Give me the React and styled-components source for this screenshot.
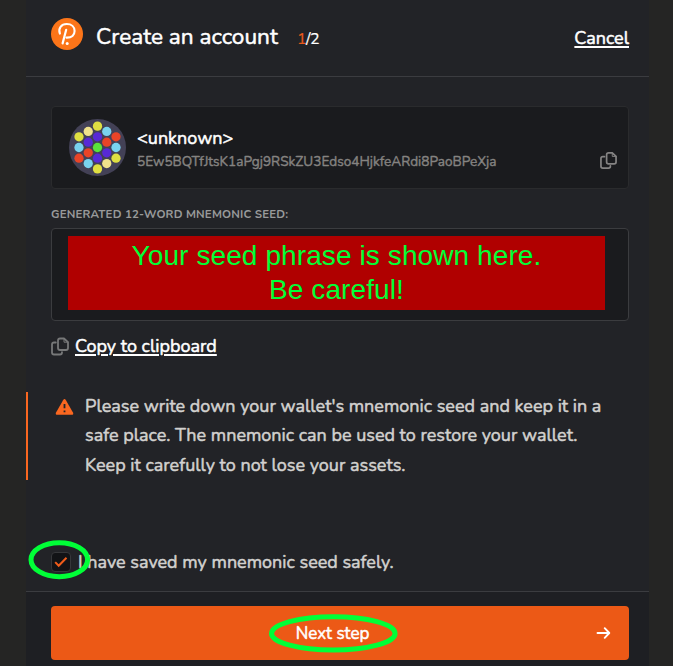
import React from 'react';
import styled, { createGlobalStyle } from 'styled-components';

const GlobalStyle = createGlobalStyle`
  * { box-sizing: border-box; }
  body {
    margin: 0;
    background: #252524;
    color: #fff;
    font-family: Nunito, Lato, 'Noto Sans', sans-serif;
    overflow: hidden;
  }
`;

const Panel = styled.main`
  width: 623px;
  height: 666px;
  margin-left: 26px;
  display: flex;
  flex-direction: column;
  background: #222327;
`;

const Header = styled.header`
  height: 77px;
  flex: none;
  display: flex;
  align-items: flex-start;
  padding: 18px 20px 0 25px;
  border-bottom: 1px solid #3b3c40;
`;

const Title = styled.h1`
  margin: 0 0 0 13px;
  width: 188px;
  font-size: 22.6px;
  line-height: 37px;
  font-weight: 400;
  -webkit-text-stroke: 0.5px #fff;
  white-space: nowrap;
`;

const Step = styled.span`
  margin-left: 13px;
  font-size: 16px;
  line-height: 43px;
  letter-spacing: -0.6px;
  -webkit-text-stroke: 0.2px currentColor;
  em { font-style: normal; color: #ea5a1c; }
`;

const Link = styled.a`
  color: #fff;
  font-size: 18px;
  line-height: 24px;
  -webkit-text-stroke: 0.5px #fff;
  text-decoration: underline;
  text-decoration-thickness: 2px;
  text-underline-offset: 2px;
  white-space: nowrap;
`;

const CancelLink = styled(Link)`
  margin: 8px 0 0 auto;
`;

const Body = styled.section`
  height: 514px;
  flex: none;
  display: flex;
  flex-direction: column;
`;

const AccountCard = styled.div`
  height: 83px;
  margin: 29px 20px 0 25px;
  padding: 12px 11px 0 17px;
  display: flex;
  background: #1a1b1e;
  border: 1px solid #2a2b2d;
  border-radius: 4px;
`;

const AccountInfo = styled.div`
  flex: 1;
  margin-left: 11px;
  padding-top: 7px;
`;

const AccountName = styled.div`
  font-size: 18px;
  line-height: 24px;
  -webkit-text-stroke: 0.5px #fff;
`;

const Address = styled.div`
  font-size: 13.6px;
  line-height: 24px;
  color: #858381;
  -webkit-text-stroke: 0.4px #858381;
  white-space: nowrap;
`;

const CardIcon = styled.div`
  margin-top: 33px;
  height: 17px;
`;

const FieldLabel = styled.div`
  margin: 17px 0 0 25px;
  font-size: 11.5px;
  font-weight: 700;
  line-height: 16px;
  letter-spacing: 0.18px;
  color: #999a9b;
  white-space: nowrap;
`;

const SeedBox = styled.div`
  height: 93px;
  flex: none;
  margin: 6px 20px 0 25px;
  padding: 7px 23px 0 16px;
  background: #1a1b1e;
  border: 1px solid #3b3c3f;
  border-radius: 4px;
`;

const SeedCover = styled.div`
  height: 74px;
  padding-top: 3px;
  background: #b00000;
  color: #00ff37;
  font: 28px/34px 'Liberation Sans', Arial, sans-serif;
  letter-spacing: 0.1px;
  text-align: center;
`;

const CopyRow = styled.div`
  display: flex;
  align-items: center;
  gap: 6px;
  height: 24px;
  margin: 13px 0 0 25px;
`;

const Warning = styled.div`
  display: flex;
  height: 88px;
  margin-top: 34px;
  padding-left: 27px;
  border-left: 2px solid #fa6720;
`;

const WarningIcon = styled.svg`
  flex: none;
  width: 19px;
  height: 18px;
  margin-top: 6px;
`;

const WarningText = styled.p`
  margin: 0 0 0 11px;
  font-size: 18px;
  line-height: 29.3px;
  color: #d2d1cf;
  -webkit-text-stroke: 0.5px #d2d1cf;
  white-space: nowrap;
`;

const Line = styled.span`
  display: block;
`;

const Agreement = styled.label`
  position: relative;
  display: flex;
  align-items: center;
  height: 24px;
  margin: 70px 0 0 25px;
  font-size: 18px;
  color: #d2d1cf;
  -webkit-text-stroke: 0.5px #d2d1cf;
  white-space: nowrap;
`;

const Checkbox = styled.span`
  width: 20px;
  height: 20px;
  margin-right: 7px;
  display: grid;
  place-items: center;
  background: #121316;
  border: 1px solid #36373a;
  border-radius: 4px;
`;

const Footer = styled.footer`
  flex: 1;
  padding: 14px 20px 0 25px;
  background: #1e1f23;
  border-top: 1px solid #3b3c40;
`;

const NextButton = styled.button`
  position: relative;
  display: grid;
  grid-template-columns: 1fr auto 1fr;
  align-items: center;
  width: 100%;
  height: 54px;
  padding: 0 18px 0 0;
  border: 0;
  border-radius: 4px;
  background: #ec5916;
  color: #fff;
  font-family: inherit;
  font-size: 17px;
`;

const NextLabel = styled.span`
  grid-column: 2;
  margin-left: 3px;
  -webkit-text-stroke: 0.5px #fff;
`;

const Arrow = styled.svg`
  justify-self: end;
`;

const Ring = styled.svg`
  position: absolute;
  left: ${(p) => p.$left}px;
  top: ${(p) => p.$top}px;
  overflow: visible;
`;

const Y = '#dfdf42', P = '#5829d6', C = '#f0e28c', B = '#79d3ef', R = '#e94427', G = '#5ae23d';
const DOTS = [
  [0, -24, Y], [0, -12, P], [-10.39, -18, C], [-20.78, -12, Y], [-10.39, -6, P],
  [-20.78, 0, B], [-20.78, 12, R], [-10.39, 6, R], [-10.39, 18, B], [0, 24, Y],
  [0, 12, P], [10.39, 18, C], [20.78, 12, Y], [10.39, 6, P], [20.78, 0, B],
  [20.78, -12, R], [10.39, -6, R], [10.39, -18, B], [0, 0, G],
];

function Identicon() {
  return (
    <svg width="57" height="57" viewBox="-32 -32 64 64">
      <circle r="32" fill="#434156" />
      {DOTS.map(([x, y, color], i) => <circle key={i} cx={x} cy={y} r="5.2" fill={color} />)}
    </svg>
  );
}

function Logo() {
  return (
    <svg width="32" height="32" viewBox="0 0 32 32" fill="none">
      <circle cx="16" cy="16" r="16" fill="#fc7519" />
      <path d="M8.9 15.6C6.9 10.2 10.4 6 15.7 6C20.5 6 23.6 9 23.6 13C23.6 17.2 20.8 19.8 15.4 19.6" stroke="#fff" strokeWidth="2.1" strokeLinecap="round" />
      <path d="M15.2 11.8L11.6 25.4" stroke="#fff" strokeWidth="2.2" strokeLinecap="round" />
      <circle cx="16.2" cy="25.4" r="1.5" fill="#fff" />
    </svg>
  );
}

function CopyIcon({ width = 17, height = 17, color = '#858484' }) {
  return (
    <svg width={width} height={height} viewBox="0 0 18 18" fill="none" stroke={color} strokeWidth="1.8" strokeLinejoin="round" strokeLinecap="round">
      <path d="M9 1H13L17 4.7V10.5Q17 12.5 15 12.5H9Q7 12.5 7 10.5V3Q7 1 9 1Z" />
      <path d="M13 1V4.7H17" strokeWidth="1" />
      <path d="M4.8 5H3Q1 5 1 7V15Q1 17 3 17H9Q11 17 11 15V14.6" />
    </svg>
  );
}

export default function App() {
  return (
    <>
      <GlobalStyle />
      <Panel>
        <Header>
          <Logo />
          <Title>Create an account</Title>
          <Step><em>1</em>/2</Step>
          <CancelLink>Cancel</CancelLink>
        </Header>
        <Body>
          <AccountCard>
            <Identicon />
            <AccountInfo>
              <AccountName>&lt;unknown&gt;</AccountName>
              <Address>5Ew5BQTfJtsK1aPgj9RSkZU3Edso4HjkfeARdi8PaoBPeXja</Address>
            </AccountInfo>
            <CardIcon><CopyIcon /></CardIcon>
          </AccountCard>
          <FieldLabel>GENERATED 12-WORD MNEMONIC SEED:</FieldLabel>
          <SeedBox>
            <SeedCover>Your seed phrase is shown here.<br />Be careful!</SeedCover>
          </SeedBox>
          <CopyRow>
            <CopyIcon width={18} height={19} color="#777879" />
            <Link>Copy to clipboard</Link>
          </CopyRow>
          <Warning>
            <WarningIcon viewBox="0 0 20 18">
              <path d="M8.5 1.8Q10 -.4 11.5 1.8L18.9 14.7Q20 17.2 17.4 17.2H2.6Q0 17.2 1.1 14.7Z" fill="#fa6720" />
              <path d="M10 5.8V10.3M10 12.7V14.5" stroke="#222327" strokeWidth="1.9" />
            </WarningIcon>
            <WarningText>
              <Line>Please write down your wallet's mnemonic seed and keep it in a</Line>
              <Line>safe place. The mnemonic can be used to restore your wallet.</Line>
              <Line>Keep it carefully to not lose your assets.</Line>
            </WarningText>
          </Warning>
          <Agreement>
            <Checkbox>
              <svg width="14" height="12" viewBox="0 0 14 12" fill="none">
                <path d="M1.2 6.1L4.7 9.7L12.5 1.7" stroke="#f15c1a" strokeWidth="2" />
              </svg>
            </Checkbox>
            <span>I have saved my mnemonic seed safely.</span>
            <Ring $left={-22} $top={-9} width="61" height="39">
              <ellipse cx="30.3" cy="18.7" rx="28.3" ry="17" fill="none" stroke="#00ff37" strokeWidth="5" />
            </Ring>
          </Agreement>
        </Body>
        <Footer>
          <NextButton>
            <NextLabel>Next step</NextLabel>
            <Arrow width="15" height="14" viewBox="0 0 15 14" fill="none" stroke="#fff" strokeWidth="1.9" strokeLinecap="round" strokeLinejoin="round">
              <path d="M1.5 7H13M8.7 2.2L13.3 7L8.7 11.8" />
            </Arrow>
            <Ring $left={218} $top={9} width="129" height="38">
              <ellipse cx="64.3" cy="18.4" rx="61.8" ry="16.6" fill="none" stroke="#00ff37" strokeWidth="5" />
            </Ring>
          </NextButton>
        </Footer>
      </Panel>
    </>
  );
}
